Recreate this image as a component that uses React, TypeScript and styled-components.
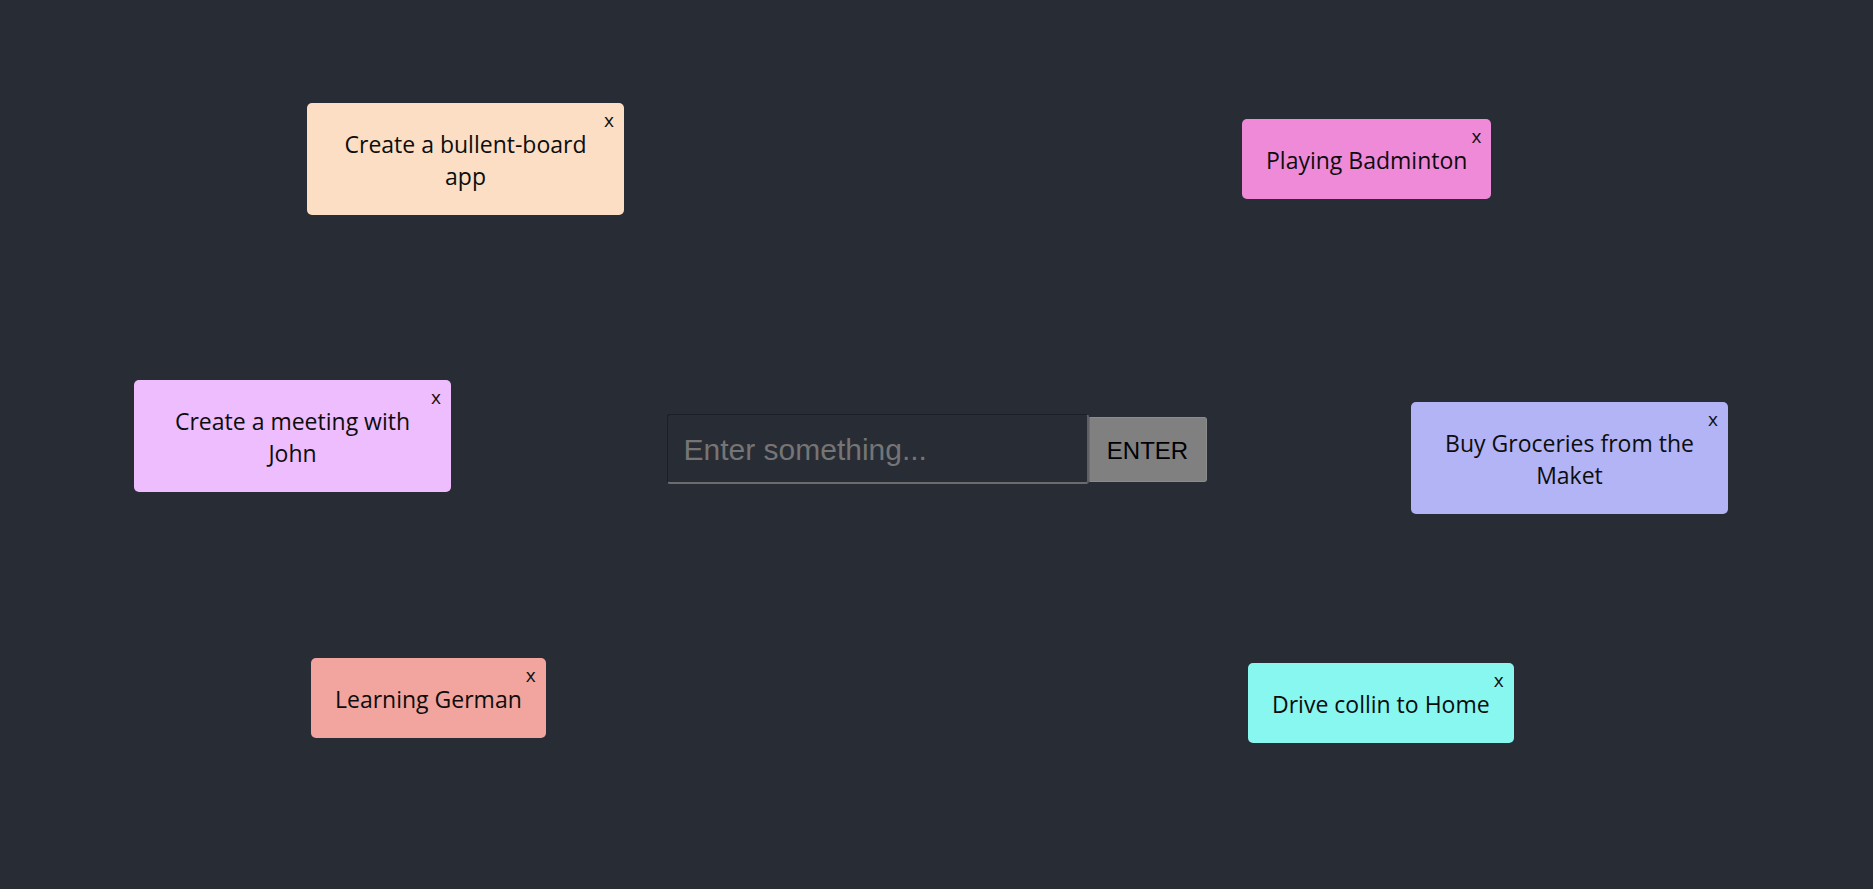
import React, { useState } from "react";
import styled, { createGlobalStyle } from "styled-components";

const GlobalStyle = createGlobalStyle`
  html, body {
    margin: 0;
    padding: 0;
    background: #282c34;
  }
  * { box-sizing: border-box; }
`;

const Board = styled.main`
  position: relative;
  width: 100%;
  height: 889px;
  overflow: hidden;
  display: flex;
  align-items: center;
  justify-content: center;
  padding-top: 9px;
  background: #282c34;
`;

const Form = styled.form`
  display: flex;
  align-items: center;
`;

const Input = styled.input`
  width: 422px;
  height: 70px;
  padding: 2px 16px 0;
  background: transparent;
  border-style: solid;
  border-width: 1px 2px 2px 1px;
  border-color: #1c1f25 #5e6066 #6c6c6c #1c1f25;
  border-radius: 3px;
  color: #ddd;
  font-family: "Liberation Sans", Arial, sans-serif;
  font-size: 30px;
  outline: none;
  caret-color: #8a8a8a;
  &::placeholder {
    color: #757575;
  }
`;

const Button = styled.button`
  width: 118px;
  height: 65px;
  background: #808080;
  border: 1px solid #8c8c8c;
  border-left-color: #6e6e6e;
  border-radius: 0 3px 3px 0;
  color: #000;
  font-family: "Liberation Sans", Arial, sans-serif;
  font-size: 24px;
  padding: 3px 0 0;
  cursor: pointer;
`;

const Note = styled.div<{ $x: number; $y: number; $bg: string }>`
  position: absolute;
  left: ${(p) => p.$x}px;
  top: ${(p) => p.$y}px;
  max-width: 317px;
  padding: 25px 24px 23px;
  background: ${(p) => p.$bg};
  border-radius: 5px;
  color: #0d0d0d;
  font-family: "Open Sans", "Noto Sans", sans-serif;
  font-size: 23px;
  line-height: 32px;
  text-align: center;
`;

const Close = styled.span`
  position: absolute;
  top: 5px;
  right: 10px;
  font-family: "Open Sans", "Noto Sans", sans-serif;
  font-size: 19px;
  line-height: 24px;
  color: #111;
  cursor: pointer;
`;

type Item = { id: number; text: string; x: number; y: number; bg: string };

const initial: Item[] = [
  { id: 1, text: "Create a bullent-board app", x: 307, y: 103, bg: "#fcdec4" },
  { id: 2, text: "Playing Badminton", x: 1242, y: 119, bg: "#ef8ad9" },
  { id: 3, text: "Create a meeting with John", x: 134, y: 380, bg: "#eebdfd" },
  { id: 4, text: "Buy Groceries from the Maket", x: 1411, y: 402, bg: "#b3b4f5" },
  { id: 5, text: "Learning German", x: 311, y: 658, bg: "#f2a59f" },
  { id: 6, text: "Drive collin to Home", x: 1248, y: 663, bg: "#88f7f0" },
];

export default function App() {
  const [items, setItems] = useState<Item[]>(initial);
  const [value, setValue] = useState("");

  return (
    <>
      <GlobalStyle />
      <Board>
        <Form onSubmit={(e) => e.preventDefault()}>
          <Input
            autoFocus
            placeholder="Enter something..."
            value={value}
            onChange={(e) => setValue(e.target.value)}
          />
          <Button type="submit">ENTER</Button>
        </Form>
        {items.map((it) => (
          <Note key={it.id} $x={it.x} $y={it.y} $bg={it.bg}>
            <Close onClick={() => setItems(items.filter((i) => i.id !== it.id))}>x</Close>
            {it.text}
          </Note>
        ))}
      </Board>
    </>
  );
}
